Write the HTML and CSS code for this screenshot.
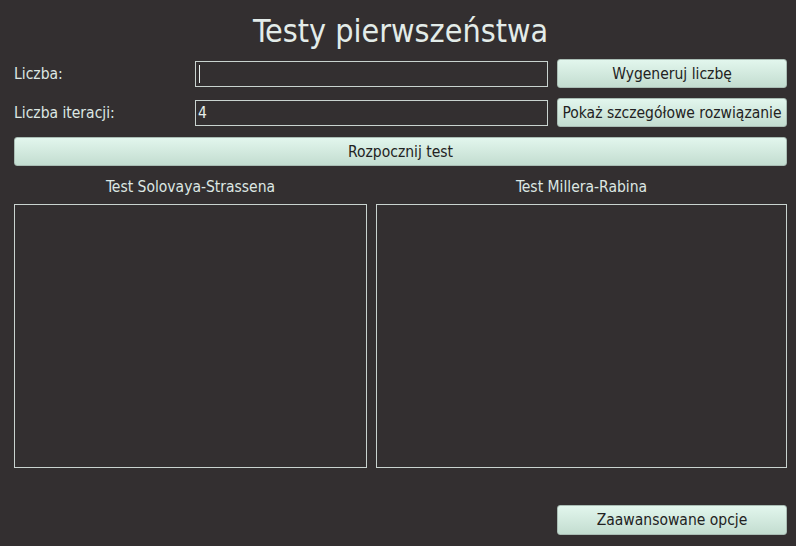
FILE: index.html
```html
<!DOCTYPE html>
<html lang="pl">
<head>
<meta charset="utf-8">
<title>Testy pierwszeństwa</title>
<link rel="stylesheet" href="styles.css">
</head>
<body>
<div class="app">
  <h1 class="title">Testy pierwszeństwa</h1>
  <div class="form">
    <div class="label">Liczba:</div>
    <div class="field"><span class="caret"></span></div>
    <button class="btn">Wygeneruj liczbę</button>
    <div class="label">Liczba iteracji:</div>
    <div class="field">4</div>
    <button class="btn">Pokaż szczegółowe rozwiązanie</button>
    <button class="btn wide">Rozpocznij test</button>
  </div>
  <div class="results">
    <div class="col">
      <div class="col-title">Test Solovaya-Strassena</div>
      <div class="box"></div>
    </div>
    <div class="col">
      <div class="col-title">Test Millera-Rabina</div>
      <div class="box"></div>
    </div>
  </div>
  <div class="footer">
    <button class="btn">Zaawansowane opcje</button>
  </div>
</div>
</body>
</html>
```

FILE: styles.css
```css
* { box-sizing: border-box; }
html, body {
  margin: 0;
  padding: 0;
  background: #332f30;
}
body {
  width: 796px;
  height: 546px;
  overflow: hidden;
  font-family: "DejaVu Sans Condensed", "DejaVu Sans", sans-serif;
  font-size: 15.5px;
  color: #dde7e3;
}
.app {
  padding: 0 9px 0 14px;
}
.title {
  margin: 0;
  height: 59px;
  padding-top: 11px;
  font-size: 32px;
  line-height: 40px;
  font-weight: normal;
  text-align: center;
  color: #e3ece9;
}
.form {
  display: grid;
  grid-template-columns: 172px 353px 230px;
  grid-auto-rows: 29px;
  column-gap: 9px;
  row-gap: 10px;
  align-items: center;
}
.label {
  line-height: 20px;
}
.field {
  height: 26px;
  border: 1px solid #c9d3cf;
  padding: 0 2px;
  line-height: 24px;
  display: flex;
  align-items: center;
  color: #e6eeeb;
}
.caret {
  display: block;
  width: 1px;
  height: 18px;
  margin-left: 1px;
  background: #e6eeeb;
}
.btn {
  height: 29px;
  margin: 0;
  padding: 0 2px;
  border: 1px solid #a9bdb4;
  border-radius: 3px;
  background: linear-gradient(#e2f6ed, #c3ddd0);
  font-family: inherit;
  font-size: 15.5px;
  color: #222;
  white-space: nowrap;
}
.wide {
  grid-column: 1 / -1;
}
.results {
  display: grid;
  grid-template-columns: 353px 1fr;
  column-gap: 9px;
  margin-top: 8px;
}
.col-title {
  height: 30px;
  padding-top: 3px;
  line-height: 20px;
  text-align: center;
}
.box {
  height: 264px;
  border: 1px solid #c9d3cf;
}
.footer {
  display: flex;
  justify-content: flex-end;
  margin-top: 37px;
}
.footer .btn {
  width: 230px;
  height: 30px;
}
```
